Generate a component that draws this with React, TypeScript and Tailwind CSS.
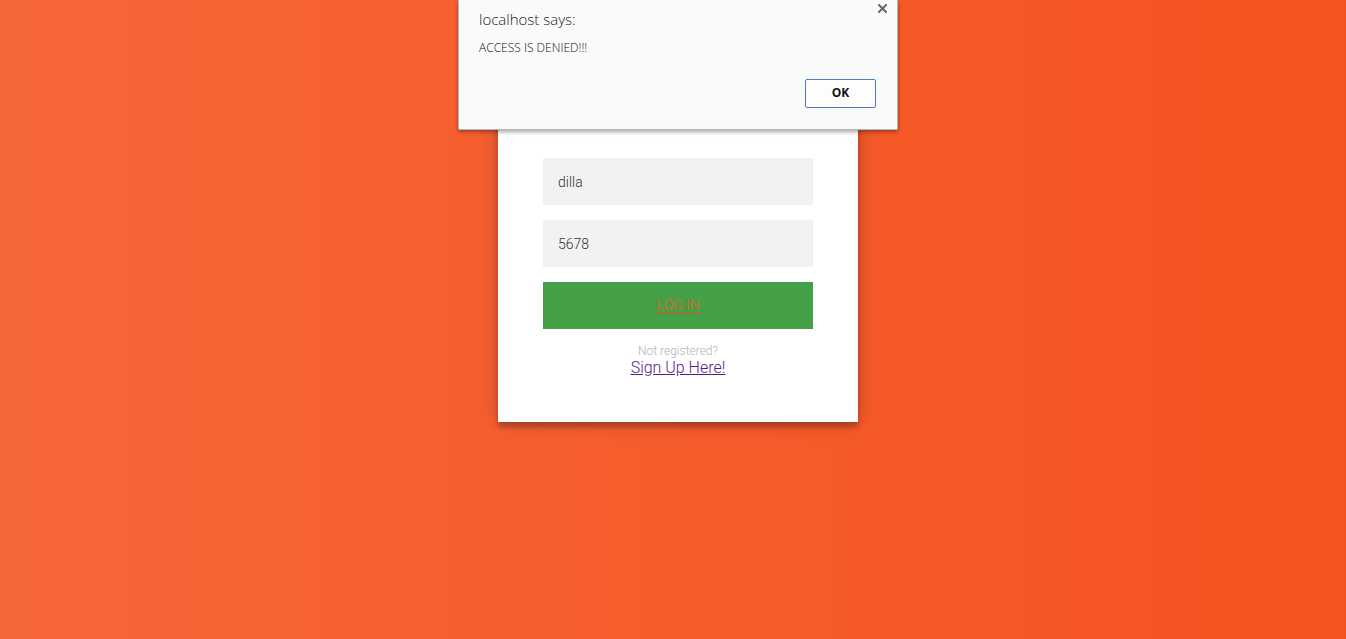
import React, { useState } from "react";

const AlertDialog: React.FC<{ onClose: () => void }> = ({ onClose }) => {
  return (
    <div className="absolute left-[458px] top-0 w-[440px] h-[130px] bg-[#fafafa] border border-[#b5b5b5] border-t-0 rounded-b-[2px] shadow-[0_2px_4px_rgba(0,0,0,0.35)] font-['Open_Sans','Noto_Sans',sans-serif]">
      <button onClick={onClose} className="absolute right-[10px] top-[4px] p-0" aria-label="close">
        <svg width="9" height="9" viewBox="0 0 9 9">
          <path d="M1 1L8 8M8 1L1 8" stroke="#666" strokeWidth="2" strokeLinecap="square" />
        </svg>
      </button>
      <div className="pl-[20px] pt-[8px] text-[15px] text-[#222]">localhost says:</div>
      <div className="pl-[20px] pt-[8px] text-[12px] text-[#111]">ACCESS IS DENIED!!!</div>
      <div className="flex justify-end pr-[21px] pt-[22px]">
        <button
          onClick={onClose}
          className="w-[71px] h-[29px] border border-[#4d7bc4] rounded-[2px] bg-[#fdfdfd] text-[12px] font-bold text-[#111]"
        >
          OK
        </button>
      </div>
    </div>
  );
};

export default function App() {
  const [form, setForm] = useState({ username: "dilla", password: "5678" });
  const [showAlert, setShowAlert] = useState(true);

  const handleChange = (e: React.ChangeEvent<HTMLInputElement>) => {
    const { name, value } = e.target;
    setForm((prev) => ({ ...prev, [name]: value }));
  };

  return (
    <div className="relative min-h-[639px] bg-[linear-gradient(to_right,#f6673a,#f5521f)] font-['Roboto',sans-serif] font-light">
      <div className="pt-[113px] pl-[10px] flex justify-center">
        <div className="w-[360px] bg-white p-[45px] text-center shadow-[0_0_20px_rgba(0,0,0,0.2),0_5px_5px_rgba(0,0,0,0.24)]">
          <input
            type="text"
            name="username"
            value={form.username}
            onChange={handleChange}
            className="block w-full h-[47px] bg-[#f2f2f2] px-[15px] mb-[15px] text-[14px] text-[#333] font-light outline-none"
          />
          <input
            type="text"
            name="password"
            value={form.password}
            onChange={handleChange}
            className="block w-full h-[47px] bg-[#f2f2f2] px-[15px] mb-[15px] text-[14px] text-[#333] font-light outline-none"
          />
          <button
            onClick={() => setShowAlert(true)}
            className="flex items-center justify-center w-full h-[47px] bg-[#43a047] text-[14px] uppercase"
          >
            <a
              href="#"
              className="text-[#ef5a1e] font-light underline decoration-[#e0501a] decoration-1 underline-offset-2"
            >
              Log in
            </a>
          </button>
          <p className="mt-[15px] text-[12px] leading-[14px] text-[#b3b3b3]">Not registered?</p>
          <a href="#" className="block text-[16px] leading-[19px] font-light text-[#551a8b] underline">
            Sign Up Here!
          </a>
        </div>
      </div>
      {showAlert && <AlertDialog onClose={() => setShowAlert(false)} />}
    </div>
  );
}
